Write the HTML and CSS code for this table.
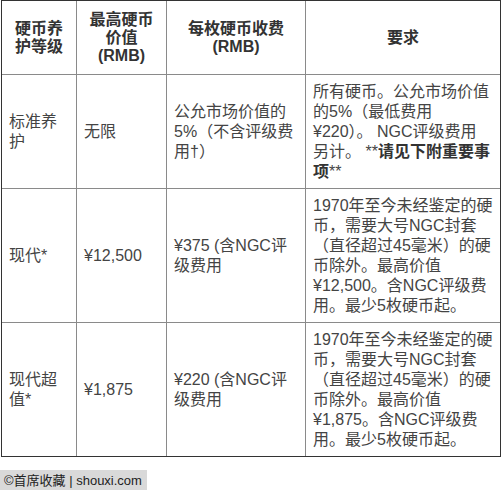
FILE: index.html
```html
<!DOCTYPE html>
<html lang="zh">
<head>
<meta charset="utf-8">
<title>NGC 硬币养护等级</title>
<link rel="stylesheet" href="styles.css">
</head>
<body>
<table class="fees">
  <thead>
    <tr>
      <th class="c1">硬币养<br>护等级</th>
      <th class="c2">最高硬币<br>价值<br>(RMB)</th>
      <th class="c3">每枚硬币收费<br>(RMB)</th>
      <th class="c4">要求</th>
    </tr>
  </thead>
  <tbody>
    <tr class="r1">
      <td>标准养<br>护</td>
      <td>无限</td>
      <td>公允市场价值的<br>5%（不含评级费<br>用†）</td>
      <td>所有硬币。公允市场价值<br>的5%（最低费用<br>¥220）。 NGC评级费用<br>另计。 **<b>请见下附重要事<br>项</b>**</td>
    </tr>
    <tr class="r2">
      <td>现代*</td>
      <td>¥12,500</td>
      <td>¥375 (含NGC评<br>级费用</td>
      <td>1970年至今未经鉴定的硬<br>币，需要大号NGC封套<br>（直径超过45毫米）的硬<br>币除外。最高价值<br>¥12,500。含NGC评级费<br>用。最少5枚硬币起。</td>
    </tr>
    <tr class="r3">
      <td>现代超<br>值*</td>
      <td>¥1,875</td>
      <td>¥220 (含NGC评<br>级费用</td>
      <td>1970年至今未经鉴定的硬<br>币，需要大号NGC封套<br>（直径超过45毫米）的硬<br>币除外。最高价值<br>¥1,875。含NGC评级费<br>用。最少5枚硬币起。</td>
    </tr>
  </tbody>
</table>
<div class="credit">©首席收藏 | shouxi.com</div>
</body>
</html>
```
FILE: styles.css
```css
html, body {
  margin: 0;
  padding: 0;
  background: #ffffff;
}

body {
  font-family: "Liberation Sans", Arial, "Noto Sans CJK SC", sans-serif;
  color: #444444;
}

.fees {
  margin: 0 0 0 1px;
  width: 500px;
  table-layout: fixed;
  border-collapse: separate;
  border-spacing: 0;
  border: 1px solid #333333;
  font-size: 16px;
}

.fees th,
.fees td {
  box-sizing: border-box;
  border-right: 1px solid #8a8a8a;
  border-bottom: 1px solid #8a8a8a;
}

.fees th:last-child,
.fees td:last-child {
  border-right: none;
}

.fees tbody tr:last-child td {
  border-bottom: none;
}

.fees th {
  font-weight: bold;
  color: #333333;
  line-height: 18px;
  padding: 10px 4px 9px;
  text-align: center;
  vertical-align: middle;
}

.fees .c1 { width: 75px; }
.fees .c2 { width: 90px; }
.fees .c3 { width: 139px; }
.fees .c4 { width: 194px; }

.fees td {
  line-height: 20px;
  padding: 7px 7px 6px;
  text-align: left;
  vertical-align: middle;
  white-space: nowrap;
}

.fees td b {
  color: #333333;
}

.credit {
  display: inline-block;
  margin-top: 13px;
  padding: 0 5px 0 4px;
  height: 21px;
  line-height: 21px;
  background: #d9d9d9;
  color: #222222;
  font-size: 13px;
}
```
